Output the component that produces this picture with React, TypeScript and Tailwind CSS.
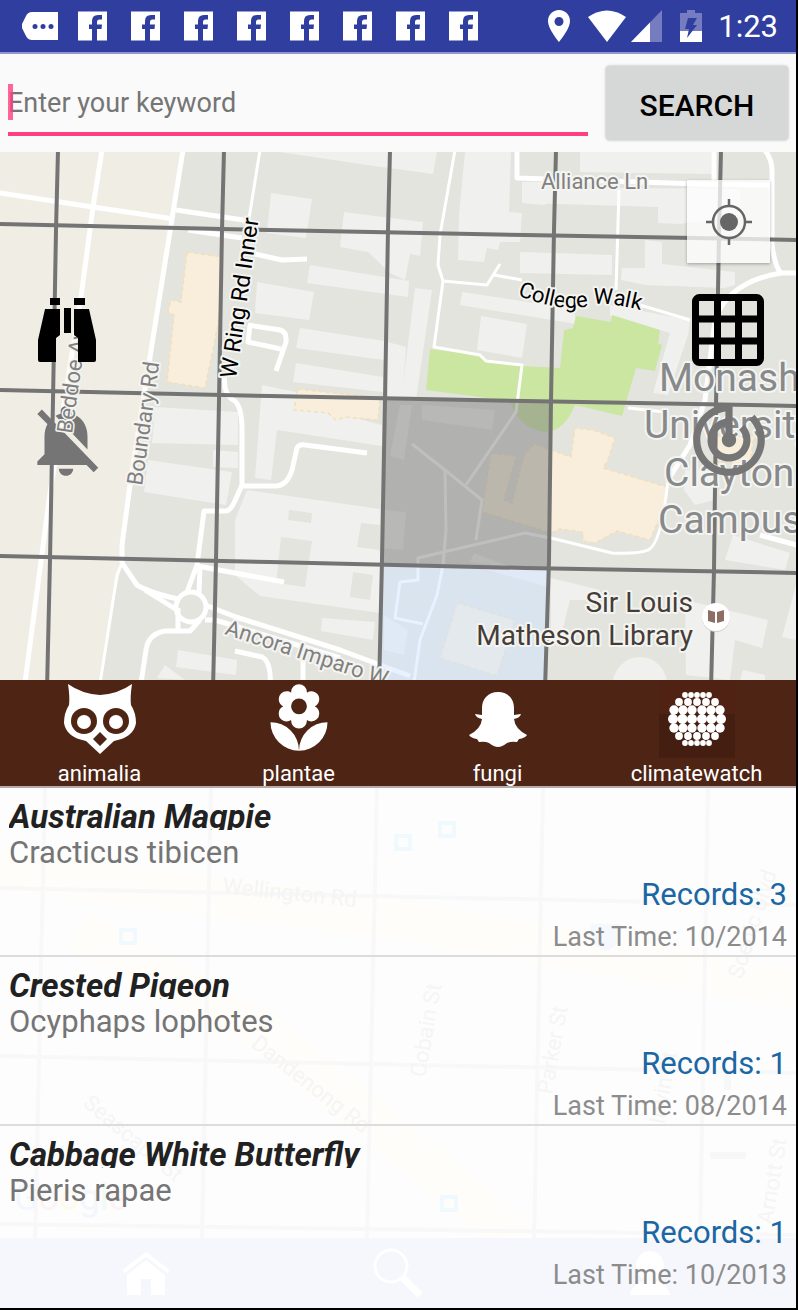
import React from "react";
import { MdTrackChanges, MdLocalFlorist } from "react-icons/md";

const facebookNotices = [1, 2, 3, 4, 5, 6, 7, 8];

const records = [
  { name: "Australian Magpie", latin: "Cracticus tibicen", count: 3, last: "10/2014" },
  { name: "Crested Pigeon", latin: "Ocyphaps lophotes", count: 1, last: "08/2014" },
  { name: "Cabbage White Butterfly", latin: "Pieris rapae", count: 1, last: "10/2013" },
];

function StatusBar() {
  return (
    <header className="flex h-[54px] items-center border-b-2 border-[#9197cd] bg-[#303f9f] pl-[22px] pr-[18px]">
      <svg width="36" height="28" viewBox="0 0 36 28" className="mr-5 shrink-0">
        <path d="M10 0H36V28H10Q6 28 4 24L0 16V12L4 4Q6 0 10 0Z" fill="#fff" />
        <g fill="#303f9f">
          <circle cx="13" cy="14.500" r="2.500" />
          <circle cx="21" cy="14.500" r="2.500" />
          <circle cx="29" cy="14.500" r="2.500" />
        </g>
      </svg>
      <div className="flex gap-[23px]">
        {facebookNotices.map((n) => (
          <svg key={n} width="30" height="30" viewBox="0 0 30 30" className="shrink-0">
            <rect x="0" y="0.500" width="29" height="29" fill="#fff" />
            <path d="M14 30V18H11V13.500H14V10Q14 4 20 4H24V8.500H21.500Q19 8.500 19 11V13.500H24L23.500 18H19V30Z" fill="#303f9f" />
          </svg>
        ))}
      </div>
      <div className="ml-auto flex items-center">
        <svg width="24" height="32" viewBox="0 0 24 32">
          <path fill="#fff" fillRule="evenodd" d="M12 0C5.500 0 1 5 1 11c0 8 11 21 11 21s11-13 11-21C23 5 18.500 0 12 0Zm0 7a4.500 4.500 0 1 1 0 9 4.500 4.500 0 0 1 0-9Z" />
        </svg>
        <svg width="38" height="32" viewBox="0 0 38 32" className="ml-[17px]">
          <path d="M0 7Q19-6 38 7L19 32Z" fill="#fff" />
        </svg>
        <svg width="31" height="32" viewBox="0 0 31 32" className="ml-[5px]">
          <path d="M31 0V32H0Z" fill="#757cc0" />
          <path d="M19 12.400V32H0Z" fill="#fff" />
        </svg>
        <svg width="22" height="33" viewBox="0 0 22 33" className="ml-[18px]">
          <path d="M7 0H15V3H22V21H0V3H7Z" fill="#757cc0" />
          <path d="M0 21H22V32H0Z" fill="#fff" />
          <path d="M8 8H17L13 15H17L7 28L9 19H5Z" fill="#303f9f" />
        </svg>
        <span className="ml-4 pt-[2px] text-[31px] leading-8 text-white">1:23</span>
      </div>
    </header>
  );
}

function SearchBar() {
  return (
    <form className="flex h-[98px] items-start bg-[#fafafa] pl-2 pr-2 pt-3" onSubmit={(e) => e.preventDefault()}>
      <div className="relative mr-[18px] min-w-0 flex-1 border-b-4 border-[#ff4081] pb-[9px] pt-[17px]">
        <input
          aria-label="Keyword"
          placeholder="Enter your keyword"
          className="block h-10 w-full bg-transparent text-[27px] text-[#333] outline-none placeholder:text-[#757575] placeholder:opacity-100"
        />
        <span className="absolute left-0 top-[18px] h-9 w-[5px] bg-[#ff4081]/80" />
      </div>
      <button type="submit" className="h-[74px] w-[182px] shrink-0 rounded-[4px] bg-[#d6d7d7] pt-1 text-[30px] font-medium text-black shadow-[0_0_3px_rgba(0,0,0,0.3)]">
        SEARCH
      </button>
    </form>
  );
}

const gridLines = [
  "M58 150L56 230L53 400L50 560L47 690",
  "M224 150L222 230L219 400L216 560L213 690",
  "M390 150L388 230L385 400L382 560L379 690",
  "M556 150L554 230L551 400L549 560L545 690",
  "M721 150L719 235L716 405L714 570L711 690",
  "M0 224L270 230L525 235L800 240",
  "M0 390L270 396L525 401L800 406",
  "M0 556L270 562L525 568L800 573",
];

const buildings = [
  "280,152 437,152 433,174 367,165", "271,193 312,199 306,238 267,233",
  "344,212 423,222 420,256 410,254 405,280 390,273 368,252 340,247",
  "310,265 409,281 408,297 307,283", "257,282 314,292 309,320 255,313",
  "300,328 384,341 384,360 296,348", "296,363 383,377 383,392 293,382",
  "384,341 406,347 402,400 388,400", "415,288 432,290 416,400 401,400",
  "465,152 511,152 509,212 522,213 520,242 500,242 498,250 487,248 484,262 458,260 459,215",
  "462,292 574,309 576,324 460,305", "481,316 527,324 522,358 477,350",
  "522,182 545,182 545,205 522,203", "520,252 612,255 612,275 520,273",
  "580,152 713,152 712,174 580,172", "525,187 740,189 740,215 680,224 658,223 658,207 525,203",
  "645,240 662,242 662,264 735,272 735,285 725,288 645,285 621,280 622,268 645,268",
  "610,305 690,320 688,335 668,395 653,393 670,333 610,316",
  "155,407 238,412 238,445 152,443", "148,460 232,472 226,505 144,492",
  "213,450 238,452 238,468 213,467", "262,385 296,392 296,402 382,425 382,446 277,430 271,480 255,478",
  "247,490 380,509 380,613 260,596 235,575 235,520",
  "322,618 375,622 373,640 321,631", "178,650 237,660 236,675 176,667", "165,665 185,680 157,678",
  "400,405 412,405 404,460 390,456", "422,405 495,410 492,430 422,420",
  "384,510 406,512 403,550 384,548", "474,553 510,567 470,562", "480,568 548,570 548,587",
  "384,615 408,630 404,655 384,650", "551,578 600,590 595,600 570,600 560,640 551,640",
  "684,490 685,470 712,470 714,500 695,505", "733,535 790,553 785,570 725,560",
  "685,600 768,620 762,648 735,640 730,680 686,675", "743,670 765,675 765,680 740,680",
  "796,585 782,637 796,640",
];

const courtyards = [
  "289,510 312,513 311,523 288,520", "281,537 312,541 305,587 276,583",
  "361,523 380,525 380,550 357,547", "353,572 373,575 370,600 350,597",
];

const wideRoads = [
  "M102 150L93 207L81 297L50 493L24 690", "M0 193L93 207L174 219", "M183 150L150 357L130 485L122 545V563",
  "M176 210L250 221", "M188 230L242 238", "M255 254L282 260L307 259",
  "M224 375L225 388Q228 398 235 401Q242 408 242 430V485L234 503Q230 511 225 511H204L197 565L187 592",
  "M242 486H275Q287 486 292 470L297 448Q299 444 305 445L367 453",
  "M248 325L280 330Q287 332 286 342L276 371", "M250 325L248 342L281 349",
  "M122 563L137 585Q150 593 178 599", "M145 590L177 610", "M200 566L199 593", "M197 566L284 582",
  "M205 605L236 617L340 650L410 676", "M205 620H215L340 658", "M178 608V630",
  "M200 620L190 631H165Q148 634 146 650L140 690", "M235 651L262 657Q272 662 270 690", "M303 660V690",
  "M517 150V178L700 184L770 185", "M714 150V180",
  "M765 150Q772 160 772 170V245Q775 267 781 273H800", "M781 273Q728 282 715 320L705 400L690 445L668 480",
  "M760 535L800 546",
];

const narrowRoads = [
  "M122 563L117 575L110 620L99 690", "M260 150L248 225",
  "M455 150L440 235L438 265L443 281L434 347L480 355L486 361L522 365L516 412L466 485",
  "M443 281L487 285L500 264", "M494 275L522 280", "M640 305L690 320", "M619 190L616 290",
  "M668 480Q661 545 648 550Q640 554 612 553L551 538L525 533L418 558V580L400 582L395 618L423 624",
  "M628 408L665 412", "M412 444L445 470L482 500L476 540", "M445 470L446 530L443 565L437 595L420 640L413 690",
];

function CampusMap() {
  return (
    <svg viewBox="0 152 796 528" preserveAspectRatio="xMidYMid slice" className="block h-full w-full" role="img" aria-label="Map of the Clayton campus">
      <rect x="0" y="150" width="796" height="532" fill="#e3e4de" />
      <path d="M0 150H183L150 357L122 545V563L110 620L99 690H0Z" fill="#f0ede4" />
      <g fill="#f0f0ee">
        {buildings.map((p) => <polygon key={p} points={p} />)}
        <circle cx="640" cy="684" r="27" />
      </g>
      <g fill="#e3e4de">{courtyards.map((p) => <polygon key={p} points={p} />)}</g>
      <path fill="#cae6a0" d="M430 349L480 355L486 361L522 366L560 368L564 330L573 328L576 316L611 322L612 315L660 330L658 343L662 345L655 371L636 368L622 416L575 405Q564 432 545 432Q518 428 510 401L426 390Z" />
      <g fill="#f8eedb" stroke="#f3dfba" strokeWidth="1.500" strokeDasharray="4 3">
        <path d="M187 252L223 257L218 325L205 388L167 382L174 315L168 312L171 300L181 302Z" />
        <path d="M298 389L380 398L378 420L345 417L336 420L328 413L294 410Z" />
        <path d="M491 453L516 456L504 500L512 503L524 455L534 444L571 457L575 428L593 430L615 438L611 450L608 460L603 468L667 487L663 510L650 540L617 531L595 543L583 541V532L560 529L551 533L482 512Z" />
        <path d="M457 603L515 620L497 676L440 658Z" />
        <path d="M716 436H754L750 465L712 460Z" />
      </g>
      <g fill="none" stroke="#fff" strokeWidth="5" strokeLinejoin="round">
        {wideRoads.map((d) => <path key={d} d={d} />)}
        <circle cx="191" cy="607" r="15" />
      </g>
      <g fill="none" stroke="#fff" strokeWidth="3" strokeLinejoin="round">
        {narrowRoads.map((d) => <path key={d} d={d} />)}
      </g>
      <path d="M385 398L551 402L549 568L382 564Z" fill="#808080" fillOpacity="0.500" />
      <path d="M382 564L549 568L545 690H379Z" fill="#d0e4ff" fillOpacity="0.500" />
      <g fill="none" stroke="#747474" strokeWidth="4">
        {gridLines.map((d) => <path key={d} d={d} />)}
      </g>
      <g fontSize="22" fill="#808080" stroke="#f4f4f1" strokeWidth="4" strokeLinejoin="round" paintOrder="stroke">
        <text x="541" y="189">Alliance Ln</text>
        <text transform="translate(142 486) rotate(-82)">Boundary Rd</text>
        <text transform="translate(224 634) rotate(18)">Ancora Imparo W</text>
        <g fontSize="39" fill="#87898b">
          <text x="659" y="391">Monash</text>
          <text x="644" y="438">University</text>
          <text x="664" y="486">Clayton</text>
          <text x="658" y="533">Campus</text>
        </g>
        <g fill="#000">
          <text transform="translate(236 379) rotate(-82)" fontSize="23">W Ring Rd Inner</text>
          <path id="college-walk" d="M517 295Q565 315 595 304Q612 302 655 314" fill="none" stroke="none" />
          <text><textPath href="#college-walk">College Walk</textPath></text>
        </g>
        <g fontSize="28" fill="#463d39" textAnchor="end">
          <text x="693" y="612">Sir Louis</text>
          <text x="693" y="645">Matheson Library</text>
        </g>
      </g>
      <circle cx="716" cy="618" r="14" fill="#cfcfcb" />
      <circle cx="716" cy="617" r="14" fill="#fff" />
      <path d="M708 610L715 612V623L708 621ZM724 610L717 612V623L724 621Z" fill="#8d6e63" />
    </svg>
  );
}

function GridIcon() {
  return (
    <svg width="72" height="72" viewBox="0 0 72 72" className="block">
      <g fill="none" stroke="#000" strokeWidth="7">
        <rect x="3.500" y="3.500" width="65" height="65" rx="4" />
        <path d="M25.500 4V68M46.500 4V68M4 25H68M4 47H68" />
      </g>
    </svg>
  );
}

function MapPanel() {
  return (
    <section className="relative h-[528px] overflow-hidden">
      <CampusMap />
      <button aria-label="Notifications off" className="absolute left-[23px] top-[245px] text-[#757575]">
        <svg width="86" height="86" viewBox="0 0 24 24" fill="currentColor" className="block">
          <path d="M20 18.690L7.840 6.140 5.270 3.490 4 4.760l2.800 2.800v.01c-.52.99-.8 2.160-.8 3.420v5l-2 2v1h13.730l2 2L21 19.720l-1-1.030zM12 22c1.110 0 2-.89 2-2h-4c0 1.110.89 2 2 2zm6-7.320V11c0-3.080-1.640-5.640-4.500-6.320V4c0-.83-.67-1.500-1.500-1.500s-1.500.67-1.500 1.500v.68c-.15.03-.29.08-.42.12-.1.03-.2.07-.3.110h-.01c-.01 0-.01 0-.02.01-.23.09-.46.2-.68.310 0 0-.01 0-.01.010L18 14.680z" />
        </svg>
      </button>
      <svg viewBox="0 152 796 528" preserveAspectRatio="xMidYMid slice" className="pointer-events-none absolute inset-0 h-full w-full">
        <text transform="translate(72 434) rotate(-82)" fontSize="22" fill="#808080" stroke="#f4f4f1" strokeWidth="3" strokeLinejoin="round" paintOrder="stroke">Beddoe Ave</text>
      </svg>
      <button aria-label="Observations" className="absolute left-[38px] top-[145px]">
        <svg width="58" height="66" viewBox="0 0 58 66" className="block">
          <path d="M12 1H22V8H12ZM36 1H47V8H36ZM26 11H33V36H26ZM7 12H22V38L18 41V65H2Q0 65 0 63V43ZM36 12H51L58 43V63Q58 65 56 65H40V41L36 38Z" />
        </svg>
      </button>
      <button aria-label="My location" className="absolute right-[26px] top-7 grid size-[83px] place-items-center bg-white/75 shadow-[0_1px_3px_rgba(0,0,0,0.3)]">
        <svg width="48" height="48" viewBox="0 0 48 48" fill="none" stroke="#666" strokeWidth="2.500">
          <circle cx="24" cy="24" r="16" />
          <circle cx="24" cy="24" r="9" fill="#666" stroke="none" />
          <path d="M24 1V8M24 40V47M1 24H8M40 24H47" />
        </svg>
      </button>
      <button aria-label="Toggle grid" className="absolute right-8 top-[142px]">
        <GridIcon />
      </button>
      <button aria-label="Track" className="absolute right-6 top-[245px] text-[#757575]">
        <MdTrackChanges size={86} />
      </button>
    </section>
  );
}

function OwlIcon() {
  return (
    <svg width="72" height="72" viewBox="0 0 72 72" fill="#fff">
      <path fillRule="evenodd" d="M4 1Q18 11 36 12Q54 11 68 1Q66 14 67 22Q72 30 72 40Q70 54 50 58L36 71L22 58Q2 54 0 40Q0 30 5 22Q6 14 4 1ZM20 25a13 13 0 1 0 0 26a13 13 0 1 0 0-26ZM52 25a13 13 0 1 0 0 26a13 13 0 1 0 0-26ZM36 49L29 56L36 63L43 56Z" />
      <circle cx="20" cy="39" r="7" />
      <circle cx="52" cy="39" r="7" />
    </svg>
  );
}

function FungiIcon() {
  return (
    <svg width="58" height="56" viewBox="0 0 58 56" fill="#fff">
      <path d="M29 1C39 1 45 8 45 17V24L52 23Q51 27 45 28Q46 38 58 44Q56 47 50 48L48 51Q42 50 38 52Q33 56 29 56Q25 56 20 52Q16 50 10 51L8 48Q2 47 0 44Q12 38 13 28Q7 27 6 23L13 24V17C13 8 19 1 29 1Z" />
    </svg>
  );
}

const globeRows = [
  { y: 4, r: 2.9, xs: [17, 23, 29, 35, 41] },
  { y: 11, r: 3.9, xs: [11, 20, 29, 38, 47] },
  { y: 19, r: 4.7, xs: [6, 15, 24, 34, 43, 52] },
  { y: 28, r: 5, xs: [5, 14.5, 24, 34, 43.5, 53] },
  { y: 37, r: 4.7, xs: [6, 15, 24, 34, 43, 52] },
  { y: 45, r: 3.9, xs: [11, 20, 29, 38, 47] },
  { y: 52, r: 2.9, xs: [17, 23, 29, 35, 41] },
];

function GlobeIcon() {
  return (
    <svg width="58" height="56" viewBox="0 0 58 56" fill="#fff">
      {globeRows.map((row) => row.xs.map((x) => <circle key={`${row.y}-${x}`} cx={x} cy={row.y} r={row.r} />))}
    </svg>
  );
}

const categories = [
  { label: "animalia", icon: <OwlIcon /> },
  { label: "plantae", icon: <MdLocalFlorist size={76} className="text-white" /> },
  { label: "fungi", icon: <FungiIcon /> },
  {
    label: "climatewatch",
    icon: (
      <span className="grid h-[78px] w-[76px] place-items-center bg-[linear-gradient(#4f2214_44%,#451e12_44%)]">
        <GlobeIcon />
      </span>
    ),
  },
];

function Categories() {
  return (
    <nav className="grid h-[108px] grid-cols-4 overflow-hidden border-b-2 border-[#b7aca8] bg-[#4e2515]">
      {categories.map((c) => (
        <button
          key={c.label}
          className="flex flex-col items-center text-white"
        >
          <span className="grid h-[78px] place-items-center">{c.icon}</span>
          <span className="text-[22px] leading-8">{c.label}</span>
        </button>
      ))}
    </nav>
  );
}

function GhostMap() {
  return (
    <div aria-hidden="true" className="absolute inset-0 flex flex-col overflow-hidden">
      <svg viewBox="0 788 796 450" preserveAspectRatio="xMidYMin slice" className="h-[450px] w-full shrink-0">
        <g fill="none" stroke="#fefdfa" strokeWidth="40">
          <path d="M0 870L400 920L800 990" />
          <path d="M80 930L260 1030L520 1240" />
        </g>
        <g fill="none" stroke="#f8f8f8" strokeWidth="4">
          <path d="M45 788L35 1240M211 788L202 1240M377 788L367 1240M543 788L534 1240M708 788L700 1240" />
          <path d="M0 888L796 905M0 1056L796 1073M0 1224L796 1235" />
        </g>
        <g fontSize="22" fill="#f5f5f4">
          <text transform="translate(222 893) rotate(6)">Wellington Rd</text>
          <text transform="translate(250 1046) rotate(38)">Dandenong Rd</text>
          <text transform="translate(82 1105) rotate(40)">Seascape St</text>
          <text transform="translate(425 1078) rotate(-80)">Cobain St</text>
          <text transform="translate(552 1095) rotate(-80)">Parker St</text>
          <text transform="translate(664 1125) rotate(-80)">Irwin St</text>
          <text transform="translate(772 1225) rotate(-80)">Arnott St</text>
          <text transform="translate(742 980) rotate(-72)">Scenic Blvd</text>
        </g>
        <g fontSize="36" fill="#f3f6fd">
          <text x="14" y="1210">G<tspan fill="#fdf3f2">o</tspan><tspan fill="#fffaea">o</tspan>g<tspan fill="#f1faf3">l</tspan><tspan fill="#fdf3f2">e</tspan></text>
        </g>
        <g fill="none" stroke="#f0f9fe" strokeWidth="4">
          <path d="M396 836H410V849H396ZM440 823H454V836H440ZM121 930H135V943H121ZM442 1197H456V1210H442Z" />
        </g>
        <path d="M591 924H621Q624 945 606 951Q588 945 591 924Z" fill="#f5f8fd" />
        <path d="M710 1152H746V1159H710ZM724 1070H731V1090H724Z" fill="#f7f7f7" />
      </svg>
      <div className="grid flex-1 grid-cols-3 items-center bg-[#f6f7fc] px-5">
        <svg width="48" height="46" viewBox="0 0 48 46" fill="#fff" className="justify-self-center">
          <path d="M24 2L48 20L45 23L24 7L3 23L0 20ZM24 10L43 25V45H29V29H19V45H5V25Z" />
        </svg>
        <svg width="50" height="50" viewBox="0 0 50 50" fill="none" stroke="#fff" className="justify-self-center">
          <circle cx="18" cy="18" r="16" strokeWidth="3" />
          <path d="M30 30L47 47" strokeWidth="7" />
        </svg>
        <svg width="40" height="46" viewBox="0 0 40 46" fill="#fff" className="justify-self-center">
          <ellipse cx="20" cy="16" rx="14" ry="15" />
          <path d="M0 45Q2 34 14 31H26Q38 34 40 45Z" />
        </svg>
      </div>
    </div>
  );
}

function RecordList() {
  return (
    <section className="relative flex-1 bg-[#fdfdfd]">
      <GhostMap />
      <ul className="relative">
        {records.map((r) => (
          <li key={r.name} className="h-[169px] border-b-2 border-[#dcdcdc] px-[9px] pt-[11px] last:border-b-0">
            <h2 className="h-[31px] overflow-hidden text-[33px] font-bold italic leading-9 text-[#212121]">{r.name}</h2>
            <p className="text-[31px] leading-[46px] text-[#757575]">{r.latin}</p>
            <p className="text-right text-[31px] leading-[38px] text-[#1a67a3]">Records: {r.count}</p>
            <p className="text-right text-[27px] leading-[46px] text-[#8c8c8c]">Last Time: {r.last}</p>
          </li>
        ))}
      </ul>
    </section>
  );
}

export default function App() {
  return (
    <div className="flex min-h-screen flex-col bg-black pb-[2px] pr-[2px] font-['Roboto',sans-serif]">
      <StatusBar />
      <SearchBar />
      <MapPanel />
      <Categories />
      <RecordList />
    </div>
  );
}
